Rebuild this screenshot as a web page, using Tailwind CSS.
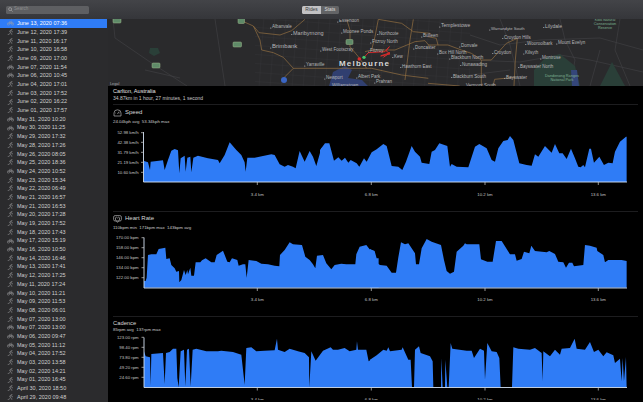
<!DOCTYPE html>
<html lang="en">
<head>
<meta charset="UTF-8">
<title>Rides</title>
<script src="https://cdn.jsdelivr.net/npm/@tailwindcss/browser@4"></script>
</head>
<body class="h-[402px] w-[643px] overflow-hidden bg-black font-['Liberation_Sans',sans-serif] text-[#d8d8d8]">

<svg class="hidden">
  <symbol id="bike" viewBox="0 0 10 7"><g fill="none" stroke="#a2a2a4" stroke-width=".7"><circle cx="2" cy="4.8" r="1.7"/><circle cx="8" cy="4.8" r="1.7"/><path d="M2 4.8 4 2l2.6 0L8 4.8M4 2l1 2.8 1.6-2.8M3.4 1.2h1.2M6.2 .8h1.2"/></g></symbol>
  <symbol id="run" viewBox="0 0 10 9"><g fill="none" stroke="#a2a2a4" stroke-width=".7"><circle cx="6.8" cy="1.1" r=".7"/><path d="M5.8 2.2 4.9 5.2 6.8 6.6 7 8.8M4.9 5.2 3.8 7.4 1.6 8.2M5.8 2.2 3.9 2.8 3.4 4.4M5.8 2.2 7.2 4l1.6.4M.6 8.8h2"/></g></symbol>
</svg>

<!-- Title bar -->
<header class="flex h-[19px] items-center bg-gradient-to-b from-[#434448] to-[#35363a]">
  <div class="ml-[6px] flex h-[8px] w-[83px] items-center gap-[1px] rounded-[1.5px] bg-[#5e5f62] pl-[2px] text-[4.5px] text-[#8c8c8e]">
    <svg class="h-[5px] w-[5px]" viewBox="0 0 5 5" fill="none" stroke="#a8a8aa" stroke-width=".7"><circle cx="2.1" cy="2.1" r="1.5"/><path d="m3.2 3.2 1.4 1.4"/></svg>
    <span>Search</span>
  </div>
  <div class="ml-[213px] flex h-[8px] w-[37px] overflow-hidden rounded-[1.5px] text-[4.8px]">
    <div class="flex w-[19px] items-center justify-center bg-[#c2c2c4] text-[#3a3a3c]">Rides</div>
    <div class="flex w-[18px] items-center justify-center bg-[#636466] text-[#dcdcdc]">Stats</div>
  </div>
</header>

<div class="flex h-[383px]">
  <!-- Ride list -->
  <aside id="rides" class="w-[108px] shrink-0 overflow-hidden bg-[#2b2b2d] pr-[1px]"></aside>

  <main class="min-w-0 flex-1 overflow-hidden bg-black">
    <!-- Map -->
    <div class="h-[67px] overflow-hidden bg-[#2a2a2c]">
      <svg class="block h-[67px] w-[535px]" viewBox="108 19 535 67">
        <defs>
          <pattern id="grid" width="11" height="9" patternUnits="userSpaceOnUse" patternTransform="rotate(4)">
            <path d="M0 0H11M0 0V9" fill="none" stroke="#3b3b3e" stroke-width=".5"/>
          </pattern>
        </defs>
        <rect x="255" y="19" width="215" height="67" fill="url(#grid)"/>
        <!-- thin roads -->
        <g fill="none" stroke="#434346" stroke-width=".6">
          <path d="M113 19 115 38 150 62 187 86M470 35 500 45 540 40 600 38 643 50M470 60 520 62 560 55 590 60 643 72M500 19 510 45 520 86M560 19 565 40 575 60 570 86M600 50 590 86M620 19 615 50 630 86M470 75 510 70M145 70 180 78M215 19 225 86"/>
        </g>
        <!-- parks and water -->
        <g>
          <path d="M534 70 545 58 560 54 575 66 580 86H534Z" fill="#2a3f38"/>
          <path d="M600 86 612 62 625 86ZM150 48h8l2 5-6 3-5-3Z" fill="#2a3f38"/>
          <path d="M329 86 333 72 345 66 352 70 348 78 362 80 368 86Z" fill="#303f70"/>
          <path d="M571 70h6l2 16h-7Z" fill="#34467a"/>
        </g>
        <!-- main roads -->
        <g transform="translate(215 0) scale(.3333)" fill="none" stroke="#8f6c40" stroke-width="2.2">
          <path d="M70 58 115 78 132 98 195 105 230 92 270 58M115 78 135 120 140 150 175 158 205 172 235 205 205 235M235 205H385L470 205 560 225 640 235M395 58 405 90 405 140 430 170 455 205M490 58 480 110 470 150 450 155M490 58 560 70 595 95 645 100M595 58 585 120 570 240M470 150H540L600 125 630 122 645 140"/>
        </g>
        <g transform="translate(428 0) scale(.3333)" fill="none" stroke="#8f6c40" stroke-width="2.2">
          <path d="M0 135H60L100 150 130 160 160 180V258M0 110 25 115 30 135M160 180H190L235 130 268 115 262 180 258 258M195 258 200 238 260 232M0 250 95 258"/>
        </g>
        <!-- route -->
        <g transform="translate(340 30) scale(.3333)">
          <path d="M72 82 85 68 135 65 148 50M148 50 138 62 150 72 122 78 150 68 130 82" fill="none" stroke="#d42a2a" stroke-width="3"/>
          <circle cx="58" cy="87" r="5.5" fill="#d92b2b"/>
          <circle cx="72" cy="82" r="5" fill="#45c46a"/>
        </g>
        <!-- shields -->
        <g fill="#5f8a68" stroke="#9db58a" stroke-width=".5">
          <rect x="113" y="17" width="8" height="6" rx="1"/>
          <rect x="152" y="63" width="8" height="5" rx="1"/>
          <rect x="238" y="17" width="6.5" height="6.5" rx="1"/>
          <rect x="233" y="42" width="8.5" height="5" rx="1"/>
          <rect x="346" y="39.500" width="7" height="5" rx="1"/>
        </g>
        <circle cx="284" cy="80" r="3" fill="#3b66c4"/>
        <g id="labels"></g>
        <text x="110" y="85" class="fill-[#a8a8aa] text-[3.8px]">Legal</text>
      </svg>
    </div>

    <!-- Ride summary -->
    <section class="mx-[5px] h-[19px] border-b border-[#1d1d1f] pt-[2px]">
      <h1 class="text-[5.6px] leading-[7px] text-[#e2e2e2]">Carlton, Australia</h1>
      <p class="text-[5px] leading-[7px] text-[#c8c8c8]">34.87km in 1 hour, 27 minutes, 1 second</p>
    </section>

    <!-- Speed -->
    <section class="h-[106px]">
      <div class="mx-[5px] flex h-[14px] items-center gap-[3px] pt-[1px] text-[6px] text-[#d8d8d8]">
        <svg class="h-[8px] w-[9px]" viewBox="0 0 9 8" fill="none" stroke="#b0b0b2" stroke-width=".7"><path d="M1 7V4A3.5 3.2 0 0 1 8 4V7ZM4.500 5 6 2.600M2.200 4h.6M6.300 4h.6"/></svg>
        <span>Speed</span>
      </div>
      <p class="mx-[5px] h-[6px] text-[4.4px] leading-[6px] text-[#c8c8c8]">24.04kph avg&nbsp; 53.34kph max</p>
      <svg class="block h-[86px] w-[535px]" viewBox="108 125 535 86">
        <polygon transform="translate(108 85) scale(.3333)" fill="#2f7cf6" points="108,291 108,228 120,232 126,255 128,230 165,226 170,255 180,225 190,197 200,192 210,196 214,265 218,220 230,212 233,260 238,218 247,215 250,262 256,218 270,212 300,220 330,225 335,235 350,210 365,172 385,195 400,210 410,232 413,260 418,218 440,218 490,208 500,210 515,238 530,245 540,240 555,245 563,250 575,198 590,230 605,198 615,215 625,243 640,190 646,185 646,291"/>
        <polygon transform="translate(320 110) scale(.3333)" fill="#2f7cf6" points="0,216 0,120 15,100 28,100 42,152 55,142 65,152 75,143 85,158 92,150 110,160 118,170 132,145 140,155 155,127 170,118 190,102 200,108 215,168 235,170 247,180 258,155 275,108 285,125 300,140 305,158 328,162 335,125 345,120 358,100 382,108 390,170 395,162 410,170 445,172 465,110 478,102 500,115 515,150 525,155 535,115 550,93 563,90 570,78 580,90 598,160 620,165 635,167 645,133 655,140 675,108 695,128 705,102 718,130 728,130 740,147 753,116 765,145 775,170 782,172 790,165 795,172 808,116 813,116 822,158 838,140 852,165 865,158 878,160 885,125 900,95 918,80 920,80 920,216"/>
        <path d="M143.500 132V182H627" fill="none" stroke="#d4e2f4" stroke-width=".9"/>
        <path d="M141 132.700h2.500M141 142.300h2.500M141 152.300h2.500M141 162.300h2.500M141 172.300h2.500M257.300 182v3M371.300 182v3M485 182v3M598.300 182v3" stroke="#d0d0d0" stroke-width=".7"/>
        <g class="fill-[#c4c4c4] text-[4.3px] [text-anchor:end]">
          <text x="138.700" y="134.300">52.98 km/h</text><text x="138.700" y="143.900">42.38 km/h</text><text x="138.700" y="153.900">31.79 km/h</text><text x="138.700" y="163.900">21.19 km/h</text><text x="138.700" y="173.900">10.60 km/h</text>
        </g>
        <g class="fill-[#c4c4c4] text-[4.3px] [text-anchor:middle]">
          <text x="257.300" y="195.500">3.4 km</text><text x="371.300" y="195.500">6.8 km</text><text x="485" y="195.500">10.2 km</text><text x="598.300" y="195.500">13.6 km</text>
        </g>
      </svg>
    </section>

    <!-- Heart rate -->
    <section class="mx-[5px] h-[14px] border-t border-[#1d1d1f]">
      <div class="flex h-[13px] items-center gap-[3px] text-[6px] text-[#d8d8d8]">
        <svg class="h-[8px] w-[9px]" viewBox="0 0 9 8" fill="none" stroke="#b0b0b2" stroke-width=".7"><rect x=".6" y=".6" width="7.800" height="5.400" rx="1.500"/><path d="M4.500 7.400 2.600 5 2.400 2.800 3.600 2.200 4.500 3 5.400 2.200 6.600 2.800 6.400 5Z"/></svg>
        <span>Heart Rate</span>
      </div>
    </section>
    <p class="mx-[5px] h-[6px] text-[4.4px] leading-[6px] text-[#c8c8c8]">110bpm min&nbsp; 171bpm max&nbsp; 143bpm avg</p>
    <svg class="block h-[85px] w-[535px]" viewBox="108 231 535 85">
      <polygon transform="translate(108 205) scale(.3333)" fill="#2f7cf6" points="108,248 108,228 113,228 116,218 120,150 130,148 145,148 152,132 172,128 175,162 185,160 190,180 200,190 205,200 213,198 214,232 220,225 228,195 233,210 238,195 240,208 247,188 250,212 258,212 263,172 277,172 282,166 293,160 310,172 320,172 326,150 345,137 358,170 365,172 372,160 388,165 392,182 405,178 412,178 416,218 422,165 445,168 460,176 480,178 500,182 514,184 516,150 530,135 545,112 555,118 582,120 592,155 605,165 615,178 622,190 627,152 645,150 655,175 670,193 680,180 700,176 715,178 742,178 745,148 755,125 775,120 785,133 800,138 806,160 812,160 812,248"/>
      <polygon transform="translate(370 205) scale(.3333)" fill="#2f7cf6" points="0,248 0,132 12,138 18,172 30,180 50,182 65,203 78,203 85,157 93,112 105,118 115,115 135,145 138,178 147,178 155,130 170,102 185,110 213,120 222,165 230,198 240,206 252,200 260,140 280,122 285,115 290,118 328,118 333,163 352,170 368,170 378,108 395,108 420,148 435,148 440,167 455,162 462,140 478,145 484,122 495,138 530,142 538,138 555,147 565,170 580,172 588,188 597,173 607,173 612,184 640,180 645,120 660,122 680,128 682,138 700,150 705,172 715,165 755,165 770,168 770,248"/>
      <path d="M144 237.500V288H627" fill="none" stroke="#d4e2f4" stroke-width=".9"/>
      <path d="M141.500 237.700h2.500M141.500 247.700h2.500M141.500 257.700h2.500M141.500 267.700h2.500M141.500 277.700h2.500M257.300 288v3M371.300 288v3M485 288v3M598.300 288v3" stroke="#d0d0d0" stroke-width=".7"/>
      <g class="fill-[#c4c4c4] text-[4.3px] [text-anchor:end]">
        <text x="138.700" y="239.300">170.00 bpm</text><text x="138.700" y="249.300">158.00 bpm</text><text x="138.700" y="259.300">146.00 bpm</text><text x="138.700" y="269.300">134.00 bpm</text><text x="138.700" y="279.300">122.00 bpm</text>
      </g>
      <g class="fill-[#c4c4c4] text-[4.3px] [text-anchor:middle]">
        <text x="257.300" y="301.200">3.4 km</text><text x="371.300" y="301.200">6.8 km</text><text x="485" y="301.200">10.2 km</text><text x="598.300" y="301.200">13.6 km</text>
      </g>
    </svg>

    <!-- Cadence -->
    <section class="mx-[5px] border-t border-[#1d1d1f] pt-[3px]">
      <h2 class="text-[5.8px] leading-[7px] text-[#d8d8d8]">Cadence</h2>
      <p class="h-[5px] text-[4.4px] leading-[5px] text-[#c8c8c8]">85rpm avg&nbsp; 137rpm max</p>
    </section>
    <svg class="block h-[68px] w-[535px]" viewBox="108 334 535 68">
      <polygon transform="translate(108 310) scale(.3333)" fill="#2f7cf6" points="108,238 108,130 113,145 126,148 128,232 130,138 165,135 170,228 174,135 185,132 195,122 205,122 208,210 212,238 218,130 228,125 232,235 237,125 243,122 248,235 254,125 265,122 295,130 330,130 340,128 375,132 400,140 410,230 415,120 430,118 445,130 470,128 500,127 507,92 510,125 530,132 545,122 570,130 590,135 603,148 604,238 610,130 623,158 645,128 668,118 675,125 690,125 710,120 725,130 745,125 747,100 750,125 775,125 782,160 800,148 812,145 812,238"/>
      <polygon transform="translate(370 310) scale(.3333)" fill="#2f7cf6" points="0,238 0,155 20,142 40,125 50,128 55,118 60,130 95,125 98,118 115,155 122,155 126,238 132,238 135,125 147,115 152,135 180,145 188,160 190,238 213,238 214,150 218,238 225,238 226,155 232,238 236,238 242,105 247,122 290,128 305,128 312,150 330,122 342,128 345,215 352,105 365,130 380,132 388,150 392,238 426,238 430,118 445,122 480,125 495,120 515,135 518,220 520,130 540,145 555,125 570,140 575,122 600,120 614,92 620,122 645,125 660,102 672,132 685,125 700,145 710,133 730,142 735,165 750,152 755,220 758,150 762,220 768,147 770,238"/>
      <path d="M144 339.500V389.500H627" fill="none" stroke="#d4e2f4" stroke-width=".9"/>
      <path d="M141.500 339.300h2.500M141.500 349.300h2.500M141.500 359.300h2.500M141.500 369.300h2.500M141.500 379.300h2.500M257.300 389.500v3M371.300 389.500v3M485 389.500v3M598.300 389.500v3" stroke="#d0d0d0" stroke-width=".7"/>
      <g class="fill-[#c4c4c4] text-[4.3px] [text-anchor:end]">
        <text x="138.700" y="340.900">123.00 rpm</text><text x="138.700" y="350.900">98.40 rpm</text><text x="138.700" y="360.900">73.80 rpm</text><text x="138.700" y="370.900">49.20 rpm</text><text x="138.700" y="380.900">24.60 rpm</text>
      </g>
      <g class="fill-[#c4c4c4] text-[4.3px] [text-anchor:middle]">
        <text x="257.300" y="403">3.4 km</text><text x="371.300" y="403">6.8 km</text><text x="485" y="403">10.2 km</text><text x="598.300" y="403">13.6 km</text>
      </g>
    </svg>
  </main>
</div>

<script>
  // b = bike, r = run
  const RIDES = [
    ["b","June 13, 2020 07:36"],["r","June 12, 2020 17:39"],["r","June 11, 2020 16:17"],["r","June 10, 2020 16:58"],
    ["r","June 09, 2020 17:00"],["b","June 07, 2020 11:54"],["b","June 06, 2020 10:45"],["r","June 04, 2020 17:01"],
    ["r","June 03, 2020 17:52"],["r","June 02, 2020 16:22"],["r","June 01, 2020 17:57"],["b","May 31, 2020 10:20"],
    ["b","May 30, 2020 11:25"],["r","May 29, 2020 17:32"],["r","May 28, 2020 17:26"],["r","May 26, 2020 08:05"],
    ["r","May 25, 2020 18:36"],["b","May 24, 2020 10:52"],["r","May 23, 2020 15:34"],["r","May 22, 2020 06:49"],
    ["r","May 21, 2020 16:57"],["r","May 21, 2020 16:53"],["r","May 20, 2020 17:28"],["r","May 19, 2020 17:52"],
    ["r","May 18, 2020 17:43"],["b","May 17, 2020 15:19"],["b","May 16, 2020 10:50"],["r","May 14, 2020 16:46"],
    ["r","May 13, 2020 17:41"],["r","May 12, 2020 17:25"],["r","May 11, 2020 17:24"],["b","May 10, 2020 11:21"],
    ["r","May 09, 2020 11:53"],["r","May 08, 2020 06:01"],["r","May 07, 2020 13:00"],["b","May 07, 2020 13:00"],
    ["b","May 06, 2020 09:47"],["b","May 05, 2020 11:12"],["r","May 04, 2020 17:52"],["r","May 03, 2020 13:58"],
    ["r","May 02, 2020 14:21"],["r","May 01, 2020 16:45"],["r","April 30, 2020 18:50"],["r","April 29, 2020 09:48"]
  ];

  document.getElementById("rides").innerHTML = RIDES.map((ride, i) => `
    <div class="flex h-[8.7px] items-center text-[5.5px] ${i === 0 ? "bg-[#2f7cf6] text-white" : "text-[#d0d0d0]"}">
      <svg class="ml-[7px] h-[6px] w-[7px] shrink-0"><use href="#${ride[0] === "b" ? "bike" : "run"}"/></svg>
      <span class="ml-[3px]">${ride[1]}</span>
    </div>`).join("");

  const PLACES = [
    [272,28,"Albanvale",4.5],[293,34.500,"Maribyrnong",5.5],[272,48,"Brimbank",6],[339,22,"Essendon",4.5],[343,33,"Moonee Ponds",4.5],
    [379,34.500,"Northcote",4.5],[372,43,"Fitzroy North",4.5],[322,51,"West Footscray",4.500],[370,52,"Fitzroy",4.5],[394,57.500,"Kew",4.5],
    [339,65.500,"Melbourne",8],[402,67.500,"Hawthorn East",4.500],[306,66,"Yarraville",4.5],[326,79,"Newport",4.5],[358,78,"Albert Park",4.5],
    [376,83,"Prahran",4.5],[332,87,"Williamstown",4.5],[415,49,"Doncaster",4.5],[423,37,"Bulleen",4.5],[441,27,"Templestowe",5],
    [491,30,"Warrandyte South",4.2],[545,27.500,"Lilydale",5],[504,38.500,"Croydon Hills",4.5],[461,47,"Donvale",4.5],[527,44.500,"Wooroolbark",4.5],
    [558,44,"Mount Evelyn",4.5],[439,54,"Box Hill North",4.5],[494,53.500,"Croydon",4.5],[525,54,"Kilsyth",4.5],[451,59,"Blackburn North",4.5],
    [542,59,"Montrose",4.5],[462,65.500,"Nunawading",4.5],[520,67.500,"Bayswater North",4.5],[453,77.500,"Blackburn South",4.5],[506,78.500,"Bayswater",4.5],
    [466,87,"Vermont South",4.5]
  ];

  document.getElementById("labels").innerHTML = PLACES.map(p => `
    ${p[3] > 7 ? "" : `<circle cx="${p[0] - 1.2}" cy="${p[1]}" r=".5" fill="#cfcfcf"/>`}
    <text x="${p[0]}" y="${p[1]}" fill="${p[3] > 7 ? "#d8d8d8" : "#b6b6b8"}" font-size="${p[3]}" ${p[3] > 7 ? 'letter-spacing="1.200" font-weight="bold"' : ""}>${p[2]}</text>`).join("") + `
    <g fill="#7eaf92" font-size="3.800" text-anchor="middle">
      <text x="562" y="77">Dandenong Ranges</text><text x="562" y="81">National Park</text>
      <text x="605" y="21">Kiok Natural</text><text x="605" y="25">Conservation</text><text x="605" y="28.500">Reserve</text>
    </g>`;
</script>
</body>
</html>
